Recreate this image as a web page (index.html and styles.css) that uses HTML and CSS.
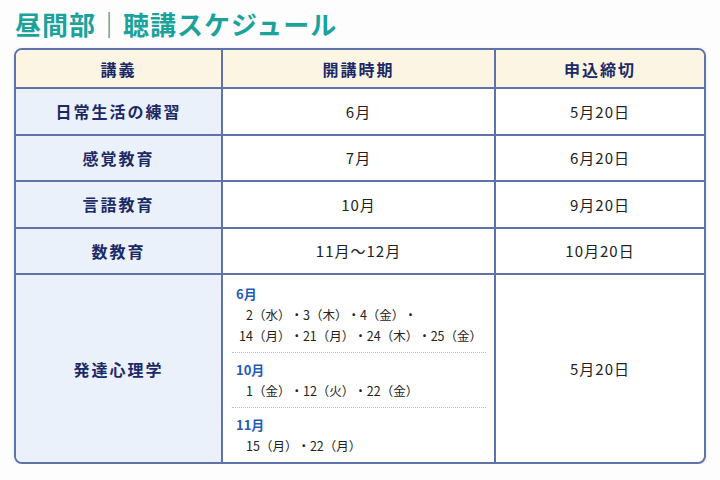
FILE: index.html
```html
<!DOCTYPE html>
<html lang="ja">
<head>
<meta charset="utf-8">
<link rel="stylesheet" href="styles.css">
</head>
<body>
<h1 class="title">昼間部｜聴講スケジュール</h1>
<div class="table">
  <div class="cell head">講義</div>
  <div class="cell head">開講時期</div>
  <div class="cell head last">申込締切</div>

  <div class="cell name">日常生活の練習</div>
  <div class="cell val">6月</div>
  <div class="cell val last">5月20日</div>

  <div class="cell name">感覚教育</div>
  <div class="cell val">7月</div>
  <div class="cell val last">6月20日</div>

  <div class="cell name">言語教育</div>
  <div class="cell val">10月</div>
  <div class="cell val last">9月20日</div>

  <div class="cell name">数教育</div>
  <div class="cell val">11月～12月</div>
  <div class="cell val last">10月20日</div>

  <div class="cell name bottom">発達心理学</div>
  <div class="cell detail bottom">
    <div class="group">
      <div class="month">6月</div>
      <div class="dates">2（水）・3（木）・4（金）・<br>14（月）・21（月）・24（木）・25（金）</div>
    </div>
    <div class="group">
      <div class="month">10月</div>
      <div class="dates">1（金）・12（火）・22（金）</div>
    </div>
    <div class="group nosep">
      <div class="month">11月</div>
      <div class="dates">15（月）・22（月）</div>
    </div>
  </div>
  <div class="cell val last bottom">5月20日</div>
</div>
</body>
</html>
```

FILE: styles.css
```css
html, body {
  margin: 0;
  padding: 0;
  background: #fdfdfe;
}
body {
  padding: 8px 14px 0 14px;
  font-family: "Noto Sans CJK JP", sans-serif;
  color: #222;
  text-spacing-trim: space-all;
}
.title {
  margin: 0 0 8px 1px;
  font-size: 26px;
  line-height: 32px;
  font-weight: 700;
  color: #1ba39b;
  letter-spacing: 1px;
}
.table {
  width: 692px;
  box-sizing: border-box;
  border: 2px solid #5f73aa;
  border-radius: 8px;
  overflow: hidden;
  display: grid;
  grid-template-columns: 207px 273px 1fr;
  grid-template-rows: 39px 46.5px 46.5px 46.5px 46.5px 1fr;
  height: 416px;
  background: #fff;
  box-shadow: 0 1px 4px rgba(60, 80, 130, 0.12);
}
.cell {
  border-right: 2px solid #5f73aa;
  border-bottom: 2px solid #5f73aa;
  display: flex;
  align-items: center;
  justify-content: center;
  box-sizing: border-box;
}
.cell.last { border-right: none; }
.cell.bottom { border-bottom: none; }
.head {
  background: #fdf5e4;
  color: #1b2a66;
  font-weight: 700;
  font-size: 16px;
  letter-spacing: 2px;
}
.name {
  background: #ebf1fb;
  color: #1b2a66;
  font-weight: 700;
  font-size: 16px;
  letter-spacing: 2px;
}
.val {
  font-size: 15px;
  letter-spacing: 1px;
  color: #222;
}
.detail {
  display: block;
  padding: 2px 8px 0 9px;
}
.group {
  padding: 6px 0 6px 4px;
  border-bottom: 1.5px dotted #9cc6ee;
}
.group.nosep { border-bottom: none; }
.month {
  color: #1f5cb8;
  font-weight: 700;
  font-size: 13px;
  line-height: 21px;
}
.dates {
  font-size: 12.5px;
  line-height: 21px;
  padding-left: 3px;
  text-indent: 7px;
  color: #222;
  letter-spacing: 0;
}
```
